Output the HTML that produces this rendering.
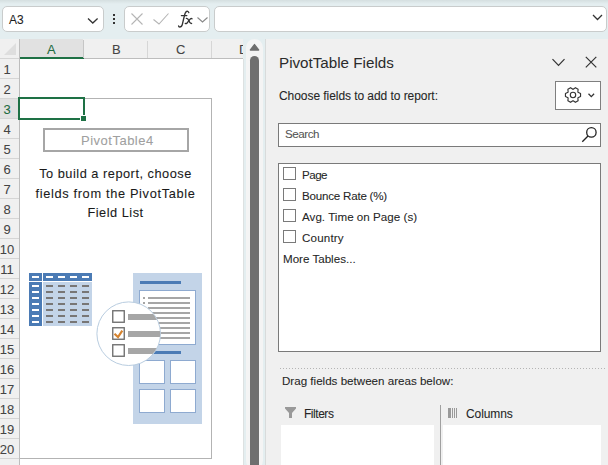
<!DOCTYPE html>
<html><head><meta charset="utf-8">
<style>
*{margin:0;padding:0;box-sizing:border-box}
html,body{width:608px;height:465px;overflow:hidden;background:#fff;font-family:"Liberation Sans",sans-serif;color:#262626}
.a{position:absolute}
.t{position:absolute;white-space:nowrap;line-height:1;-webkit-text-stroke:0.08px currentColor}
</style></head><body>
<!-- formula bar -->
<div class="a" style="left:0;top:0;width:608px;height:39px;background:#e4eef0"></div>
<div class="a" style="left:0;top:0;width:608px;height:4px;background:linear-gradient(#d5dfe0,#e4eef0)"></div>
<div class="a" style="left:2px;top:6px;width:102px;height:26px;background:#fff;border:1px solid #c9cccc;border-radius:5px"></div>
<div class="t" style="left:9px;top:13px;font-size:13.6px;color:#1f1f1f;transform:scaleX(0.88);transform-origin:0 0">A3</div>
<svg class="a" style="left:86px;top:16px" width="14" height="9"><path d="M2 2.5 L6.8 7 L11.6 2.5" fill="none" stroke="#333" stroke-width="1.3"></path></svg>
<div class="a" style="left:113px;top:14px;width:2px;height:2px;background:#333"></div>
<div class="a" style="left:113px;top:18px;width:2px;height:2px;background:#333"></div>
<div class="a" style="left:113px;top:22px;width:2px;height:2px;background:#333"></div>
<div class="a" style="left:124px;top:6px;width:86px;height:26px;background:#fff;border:1px solid #c9cccc;border-radius:5px"></div>
<svg class="a" style="left:129px;top:11px" width="44" height="16"><path d="M2.5 2.5 L13.5 13.5 M13.5 2.5 L2.5 13.5" stroke="#b5b5b5" stroke-width="1.1" fill="none"></path><path d="M24.5 8.5 L30 13 L39.5 2.5" stroke="#b5b5b5" stroke-width="1.1" fill="none"></path></svg>
<svg class="a" style="left:0;top:0" width="200" height="32"><g fill="none" stroke="#333" stroke-width="1.35" stroke-linecap="round"><path d="M188.8 12.6 C188.5 11.3 187 11 186.2 11.6 C185.2 12.4 184.6 14.5 184.2 16.5 L182.4 24.2 C181.8 26.2 180.8 27 179.8 27 C179 27 178.6 26.5 178.6 26"></path><path d="M181.4 15.6 L186.8 15.6"></path><path d="M186.4 18.4 C187.8 18.2 188.4 19.5 189 21 C189.6 22.5 190.2 23.8 191.6 23.4"></path><path d="M192 18.8 C191.3 18.1 190.6 18.4 189.5 19.8 L187.2 22.8 C186.6 23.6 185.8 23.8 185.3 23.4"></path></g></svg>
<svg class="a" style="left:196px;top:16px" width="13" height="8"><path d="M1.5 1.5 L6.5 6 L11.5 1.5" fill="none" stroke="#888" stroke-width="1.1"></path></svg>
<div class="a" style="left:214px;top:6px;width:393px;height:26px;background:#fff;border:1px solid #c9cccc;border-radius:5px"></div>
<svg class="a" style="left:591px;top:13px" width="13" height="9"><path d="M2 2 L6.5 6.5 L11 2" fill="none" stroke="#333" stroke-width="1.3"></path></svg>

<!-- column headers -->
<div class="a" style="left:0;top:39px;width:243px;height:20px;background:#f0f0f0"></div>
<svg class="a" style="left:0;top:39px" width="20" height="20"><path d="M16 4 L16 16 L4 16 Z" fill="#dedede"></path></svg>
<div class="a" style="left:20px;top:39px;width:63px;height:18px;background:#e1e1e1"></div>
<div class="a" style="left:0;top:58px;width:19px;height:1px;background:#d5d5d5"></div><div class="a" style="left:20px;top:58px;width:223px;height:1px;background:#bdbdbd"></div>
<div class="a" style="left:20px;top:57px;width:64px;height:2px;background:#1e7145"></div>
<div class="a" style="left:83px;top:40px;width:1px;height:18px;background:#c6c6c6"></div>
<div class="a" style="left:147px;top:41px;width:1px;height:17px;background:#d6d6d6"></div>
<div class="a" style="left:211px;top:41px;width:1px;height:17px;background:#d6d6d6"></div>
<div class="t" style="left:47px;top:43px;font-size:13px;color:#1e6b41">A</div>
<div class="t" style="left:112px;top:43px;font-size:13px;color:#444">B</div>
<div class="t" style="left:176px;top:43px;font-size:13px;color:#444">C</div>
<div class="a" style="left:212px;top:39px;width:31px;height:19px;overflow:hidden"><div class="t" style="left:27px;top:4px;font-size:13px;color:#444">D</div></div>

<!-- row headers -->
<div class="a" style="left:0;top:59px;width:19px;height:406px;background:#f0f0f0"></div>
<div class="a" style="left:0;top:99px;width:19px;height:19px;background:#e1e1e1"></div>
<div class="a" style="left:19px;top:39px;width:1px;height:426px;background:#bdbdbd"></div>
<div id="rows"><div class="a" style="left:0;top:78px;width:19px;height:1px;background:#d5d5d5"></div><div class="t" style="left:-6px;top:63px;width:26px;text-align:center;font-size:13px;color:#444">1</div><div class="a" style="left:0;top:98px;width:19px;height:1px;background:#d5d5d5"></div><div class="t" style="left:-6px;top:83px;width:26px;text-align:center;font-size:13px;color:#444">2</div><div class="a" style="left:0;top:118px;width:19px;height:1px;background:#d5d5d5"></div><div class="t" style="left:-6px;top:103px;width:26px;text-align:center;font-size:13px;color:#1e6b41">3</div><div class="a" style="left:0;top:138px;width:19px;height:1px;background:#d5d5d5"></div><div class="t" style="left:-6px;top:123px;width:26px;text-align:center;font-size:13px;color:#444">4</div><div class="a" style="left:0;top:158px;width:19px;height:1px;background:#d5d5d5"></div><div class="t" style="left:-6px;top:143px;width:26px;text-align:center;font-size:13px;color:#444">5</div><div class="a" style="left:0;top:178px;width:19px;height:1px;background:#d5d5d5"></div><div class="t" style="left:-6px;top:163px;width:26px;text-align:center;font-size:13px;color:#444">6</div><div class="a" style="left:0;top:198px;width:19px;height:1px;background:#d5d5d5"></div><div class="t" style="left:-6px;top:183px;width:26px;text-align:center;font-size:13px;color:#444">7</div><div class="a" style="left:0;top:218px;width:19px;height:1px;background:#d5d5d5"></div><div class="t" style="left:-6px;top:203px;width:26px;text-align:center;font-size:13px;color:#444">8</div><div class="a" style="left:0;top:238px;width:19px;height:1px;background:#d5d5d5"></div><div class="t" style="left:-6px;top:223px;width:26px;text-align:center;font-size:13px;color:#444">9</div><div class="a" style="left:0;top:258px;width:19px;height:1px;background:#d5d5d5"></div><div class="t" style="left:-6px;top:243px;width:26px;text-align:center;font-size:13px;color:#444">10</div><div class="a" style="left:0;top:278px;width:19px;height:1px;background:#d5d5d5"></div><div class="t" style="left:-6px;top:263px;width:26px;text-align:center;font-size:13px;color:#444">11</div><div class="a" style="left:0;top:298px;width:19px;height:1px;background:#d5d5d5"></div><div class="t" style="left:-6px;top:283px;width:26px;text-align:center;font-size:13px;color:#444">12</div><div class="a" style="left:0;top:318px;width:19px;height:1px;background:#d5d5d5"></div><div class="t" style="left:-6px;top:303px;width:26px;text-align:center;font-size:13px;color:#444">13</div><div class="a" style="left:0;top:338px;width:19px;height:1px;background:#d5d5d5"></div><div class="t" style="left:-6px;top:323px;width:26px;text-align:center;font-size:13px;color:#444">14</div><div class="a" style="left:0;top:358px;width:19px;height:1px;background:#d5d5d5"></div><div class="t" style="left:-6px;top:343px;width:26px;text-align:center;font-size:13px;color:#444">15</div><div class="a" style="left:0;top:378px;width:19px;height:1px;background:#d5d5d5"></div><div class="t" style="left:-6px;top:363px;width:26px;text-align:center;font-size:13px;color:#444">16</div><div class="a" style="left:0;top:398px;width:19px;height:1px;background:#d5d5d5"></div><div class="t" style="left:-6px;top:383px;width:26px;text-align:center;font-size:13px;color:#444">17</div><div class="a" style="left:0;top:418px;width:19px;height:1px;background:#d5d5d5"></div><div class="t" style="left:-6px;top:403px;width:26px;text-align:center;font-size:13px;color:#444">18</div><div class="a" style="left:0;top:438px;width:19px;height:1px;background:#d5d5d5"></div><div class="t" style="left:-6px;top:423px;width:26px;text-align:center;font-size:13px;color:#444">19</div><div class="a" style="left:0;top:458px;width:19px;height:1px;background:#d5d5d5"></div><div class="t" style="left:-6px;top:443px;width:26px;text-align:center;font-size:13px;color:#444">20</div></div>

<!-- pivot placeholder -->
<div class="a" style="left:20px;top:98px;width:192px;height:361px;border:1px solid #b3b3b3;border-left:none"></div>
<div class="a" style="left:18px;top:97px;width:67px;height:23px;border:2px solid #1e7145"></div>
<div class="a" style="left:80px;top:115px;width:7px;height:7px;background:#fff"></div>
<div class="a" style="left:81px;top:116px;width:5px;height:5px;background:#1e7145"></div>
<div class="a" style="left:43px;top:128px;width:146px;height:24px;border:2px solid #a6a6a6"></div>
<div class="t" style="left:81px;top:134px;font-size:13px;color:#a0a0a0;letter-spacing:0.5px">PivotTable4</div>
<div class="t" style="left:20px;top:164px;width:191px;text-align:center;font-size:12.8px;line-height:19.6px;color:#1a1a1a;letter-spacing:0.5px;white-space:normal">To build a report, choose<br><span style="letter-spacing:0.66px">fields from the PivotTable</span><br>Field List</div>

<!-- table icon -->
<svg class="a" style="left:0;top:260px" width="243" height="205">
 <g transform="translate(0,-260)">
  <rect x="29" y="273" width="13" height="8" fill="#4b7bb5"></rect>
  <rect x="43" y="273" width="49" height="8" fill="#4b7bb5"></rect>
  <rect x="29" y="282" width="13" height="44" fill="#4b7bb5"></rect>
  <rect x="43" y="282" width="49" height="44" fill="#c3d4e8"></rect>
  <g fill="#fff">
   <rect x="32" y="276" width="7" height="2"></rect>
   <rect x="46" y="276" width="7" height="2"></rect><rect x="58" y="276" width="7" height="2"></rect><rect x="70" y="276" width="7" height="2"></rect><rect x="82" y="276" width="7" height="2"></rect>
   <rect x="32" y="285" width="7" height="2"></rect><rect x="32" y="291" width="7" height="2"></rect><rect x="32" y="297" width="7" height="2"></rect><rect x="32" y="303" width="7" height="2"></rect><rect x="32" y="309" width="7" height="2"></rect><rect x="32" y="315" width="7" height="2"></rect><rect x="32" y="321" width="7" height="2"></rect>
  </g>
  <g fill="#787675" id="dashes"><rect x="46" y="285" width="7" height="2"></rect><rect x="58" y="285" width="7" height="2"></rect><rect x="70" y="285" width="7" height="2"></rect><rect x="82" y="285" width="7" height="2"></rect><rect x="46" y="291" width="7" height="2"></rect><rect x="58" y="291" width="7" height="2"></rect><rect x="70" y="291" width="7" height="2"></rect><rect x="82" y="291" width="7" height="2"></rect><rect x="46" y="297" width="7" height="2"></rect><rect x="58" y="297" width="7" height="2"></rect><rect x="70" y="297" width="7" height="2"></rect><rect x="82" y="297" width="7" height="2"></rect><rect x="46" y="303" width="7" height="2"></rect><rect x="58" y="303" width="7" height="2"></rect><rect x="70" y="303" width="7" height="2"></rect><rect x="82" y="303" width="7" height="2"></rect><rect x="46" y="309" width="7" height="2"></rect><rect x="58" y="309" width="7" height="2"></rect><rect x="70" y="309" width="7" height="2"></rect><rect x="82" y="309" width="7" height="2"></rect><rect x="46" y="315" width="7" height="2"></rect><rect x="58" y="315" width="7" height="2"></rect><rect x="70" y="315" width="7" height="2"></rect><rect x="82" y="315" width="7" height="2"></rect><rect x="46" y="321" width="7" height="2"></rect><rect x="58" y="321" width="7" height="2"></rect><rect x="70" y="321" width="7" height="2"></rect><rect x="82" y="321" width="7" height="2"></rect></g>
  <!-- right illustration -->
  <rect x="133" y="273" width="69" height="151" fill="#c3d4e8"></rect>
  <rect x="140" y="281" width="41" height="3" fill="#4b7bb5"></rect>
  <rect x="139.5" y="290.5" width="56" height="54" fill="#fff" stroke="#8eaad0" stroke-width="1"></rect>
  <g fill="#a6a6a6">
   <rect x="143" y="297" width="2" height="2"></rect><rect x="143" y="302" width="2" height="2"></rect>
   <rect x="148" y="297" width="42" height="2"></rect><rect x="148" y="302" width="42" height="2"></rect><rect x="148" y="307" width="42" height="2"></rect><rect x="148" y="312" width="42" height="2"></rect><rect x="148" y="317" width="42" height="2"></rect><rect x="148" y="322" width="42" height="2"></rect><rect x="148" y="327" width="42" height="2"></rect><rect x="148" y="332" width="42" height="2"></rect><rect x="148" y="337" width="42" height="2"></rect>
  </g>
  <rect x="140" y="351" width="41" height="3" fill="#4b7bb5"></rect>
  <g fill="#fff" stroke="#8eaad0" stroke-width="1">
   <rect x="139.5" y="360.5" width="25" height="23"></rect><rect x="170.5" y="360.5" width="25" height="23"></rect>
   <rect x="139.5" y="389.5" width="25" height="23"></rect><rect x="170.5" y="389.5" width="25" height="23"></rect>
  </g>
  <defs><clipPath id="cc"><circle cx="128.7" cy="333.7" r="31.5"></circle></clipPath></defs>
  <circle cx="128.7" cy="333.7" r="31.8" fill="#fff" stroke="#b9cde0" stroke-width="1"></circle>
  <g clip-path="url(#cc)" fill="#a6a6a6">
   <rect x="128" y="314" width="40" height="6"></rect><rect x="128" y="331" width="40" height="6"></rect><rect x="128" y="348" width="40" height="6"></rect>
  </g>
  <g fill="#fff" stroke="#6e6e6e" stroke-width="1.35">
   <rect x="112.75" y="310.75" width="11.5" height="11.5"></rect><rect x="112.75" y="327.75" width="11.5" height="11.5"></rect><rect x="112.75" y="344.75" width="11.5" height="11.5"></rect>
  </g>
  <path d="M114.5 333.8 L118 337 L122.3 330.6" fill="none" stroke="#d5832f" stroke-width="2.2"></path>
 </g>
</svg>

<!-- scrollbar -->
<div class="a" style="left:243px;top:39px;width:23px;height:426px;background:#e4eef0"></div>
<div class="a" style="left:243px;top:59px;width:1px;height:406px;background:#dde1e1"></div>
<div class="a" style="left:246px;top:39px;width:17px;height:430px;background:#f4f4f4;border-radius:8.5px"></div>
<svg class="a" style="left:249px;top:43px" width="11" height="9"><path d="M5.5 1.6 L9.6 7 L1.4 7 Z" fill="#6e6e6e" stroke="#6e6e6e" stroke-width="1.4" stroke-linejoin="round"></path></svg>
<div class="a" style="left:250px;top:56px;width:9px;height:420px;background:#6f6f6f;border-radius:4.5px"></div>
<div class="a" style="left:265px;top:39px;width:1px;height:426px;background:#d8dbdb"></div>

<!-- task pane -->
<div class="a" style="left:266px;top:39px;width:342px;height:426px;background:#f0f0f0"></div>
<div class="t" style="left:279px;top:55px;font-size:15.2px;color:#2b2b2b;letter-spacing:0px;-webkit-text-stroke:0">PivotTable Fields</div>
<svg class="a" style="left:550px;top:56px" width="18" height="12"><path d="M2.5 3.2 L8.5 9.5 L14.5 3.2" fill="none" stroke="#333" stroke-width="1.2"></path></svg>
<svg class="a" style="left:584px;top:55px" width="14" height="14"><path d="M1.8 1.8 L12.3 12.3 M12.3 1.8 L1.8 12.3" fill="none" stroke="#333" stroke-width="1.2"></path></svg>
<div class="t" style="left:279px;top:90px;font-size:12px;color:#262626;letter-spacing:-0.06px">Choose fields to add to report:</div>
<div class="a" style="left:555px;top:81px;width:46px;height:29px;background:#fff;border:1px solid #7f7f7f"></div>
<svg class="a" style="left:563px;top:85px" width="20" height="20" id="gear"><path d="M15.00 7.27 L17.55 8.47 L17.55 11.53 L15.00 12.73 L14.87 12.97 L15.10 15.77 L12.45 17.30 L10.13 15.70 L9.87 15.70 L7.55 17.30 L4.90 15.77 L5.13 12.97 L5.00 12.73 L2.45 11.53 L2.45 8.47 L5.00 7.27 L5.13 7.03 L4.90 4.23 L7.55 2.70 L9.87 4.30 L10.13 4.30 L12.45 2.70 L15.10 4.23 L14.87 7.03 Z" fill="none" stroke="#333" stroke-width="1.15" stroke-linejoin="round"></path><circle cx="10" cy="10" r="2.7" fill="none" stroke="#333" stroke-width="1.1"></circle></svg>
<svg class="a" style="left:587px;top:92px" width="9" height="7"><path d="M1.5 1.8 L4.3 4.6 L7.1 1.8" fill="none" stroke="#333" stroke-width="1.3"></path></svg>

<div class="a" style="left:278px;top:123px;width:323px;height:24px;background:#fff;border:1px solid #7a7a7a"></div>
<div class="t" style="left:285px;top:128px;font-size:11.6px;color:#555;letter-spacing:-0.44px">Search</div>
<svg class="a" style="left:578px;top:124px" width="22" height="22"><circle cx="13.4" cy="8.4" r="4.7" fill="none" stroke="#222" stroke-width="1.3"></circle><path d="M10 12 L4.3 17.7" stroke="#222" stroke-width="1.3"></path></svg>

<div class="a" style="left:278px;top:163px;width:323px;height:189px;background:#fff;border:1px solid #7a7a7a"></div>
<div id="fields"><div class="a" style="left:283px;top:167px;width:13px;height:13px;border:1px solid #7a7a7a;background:#fff"></div><div class="t" style="left:302px;top:169px;font-size:11.6px;color:#262626;letter-spacing:-0.51px">Page</div><div class="a" style="left:283px;top:188px;width:13px;height:13px;border:1px solid #7a7a7a;background:#fff"></div><div class="t" style="left:302px;top:190px;font-size:11.6px;color:#262626;letter-spacing:-0.22px">Bounce Rate (%)</div><div class="a" style="left:283px;top:209px;width:13px;height:13px;border:1px solid #7a7a7a;background:#fff"></div><div class="t" style="left:302px;top:211px;font-size:11.6px;color:#262626;letter-spacing:0.03px">Avg. Time on Page (s)</div><div class="a" style="left:283px;top:230px;width:13px;height:13px;border:1px solid #7a7a7a;background:#fff"></div><div class="t" style="left:302px;top:232px;font-size:11.6px;color:#262626;letter-spacing:0.17px">Country</div></div>
<div class="t" style="left:283px;top:253px;font-size:11.6px;color:#262626;letter-spacing:0px">More Tables...</div>

<div class="a" style="left:280px;top:368px;width:326px;height:1px;background-image:linear-gradient(90deg,#b4b4b4 1px,transparent 1px);background-size:3px 1px"></div>
<div class="t" style="left:282px;top:375px;font-size:11.6px;color:#262626;letter-spacing:0px">Drag fields between areas below:</div>

<svg class="a" style="left:284px;top:406px" width="14" height="14"><path d="M1 1 L12 1 L12 2.5 L8 7 L8 12 L5 12 L5 7 L1 2.5 Z" fill="#999"></path></svg>
<div class="t" style="left:304px;top:408px;font-size:12px;color:#262626;letter-spacing:-0.46px">Filters</div>
<div class="a" style="left:281px;top:425px;width:153px;height:40px;background:#fff"></div>
<div class="a" style="left:440px;top:405px;width:1px;height:60px;background:#a0a0a0"></div>
<svg class="a" style="left:448px;top:408px" width="10" height="10"><rect x="0" y="0" width="3" height="10" fill="#999"></rect><rect x="4" y="0" width="1" height="10" fill="#999"></rect><rect x="6" y="0" width="1" height="10" fill="#999"></rect><rect x="8" y="0" width="1" height="10" fill="#999"></rect></svg>
<div class="t" style="left:466px;top:408px;font-size:12px;color:#262626;letter-spacing:-0.08px">Columns</div>
<div class="a" style="left:443px;top:425px;width:158px;height:40px;background:#fff"></div>



</body></html>
